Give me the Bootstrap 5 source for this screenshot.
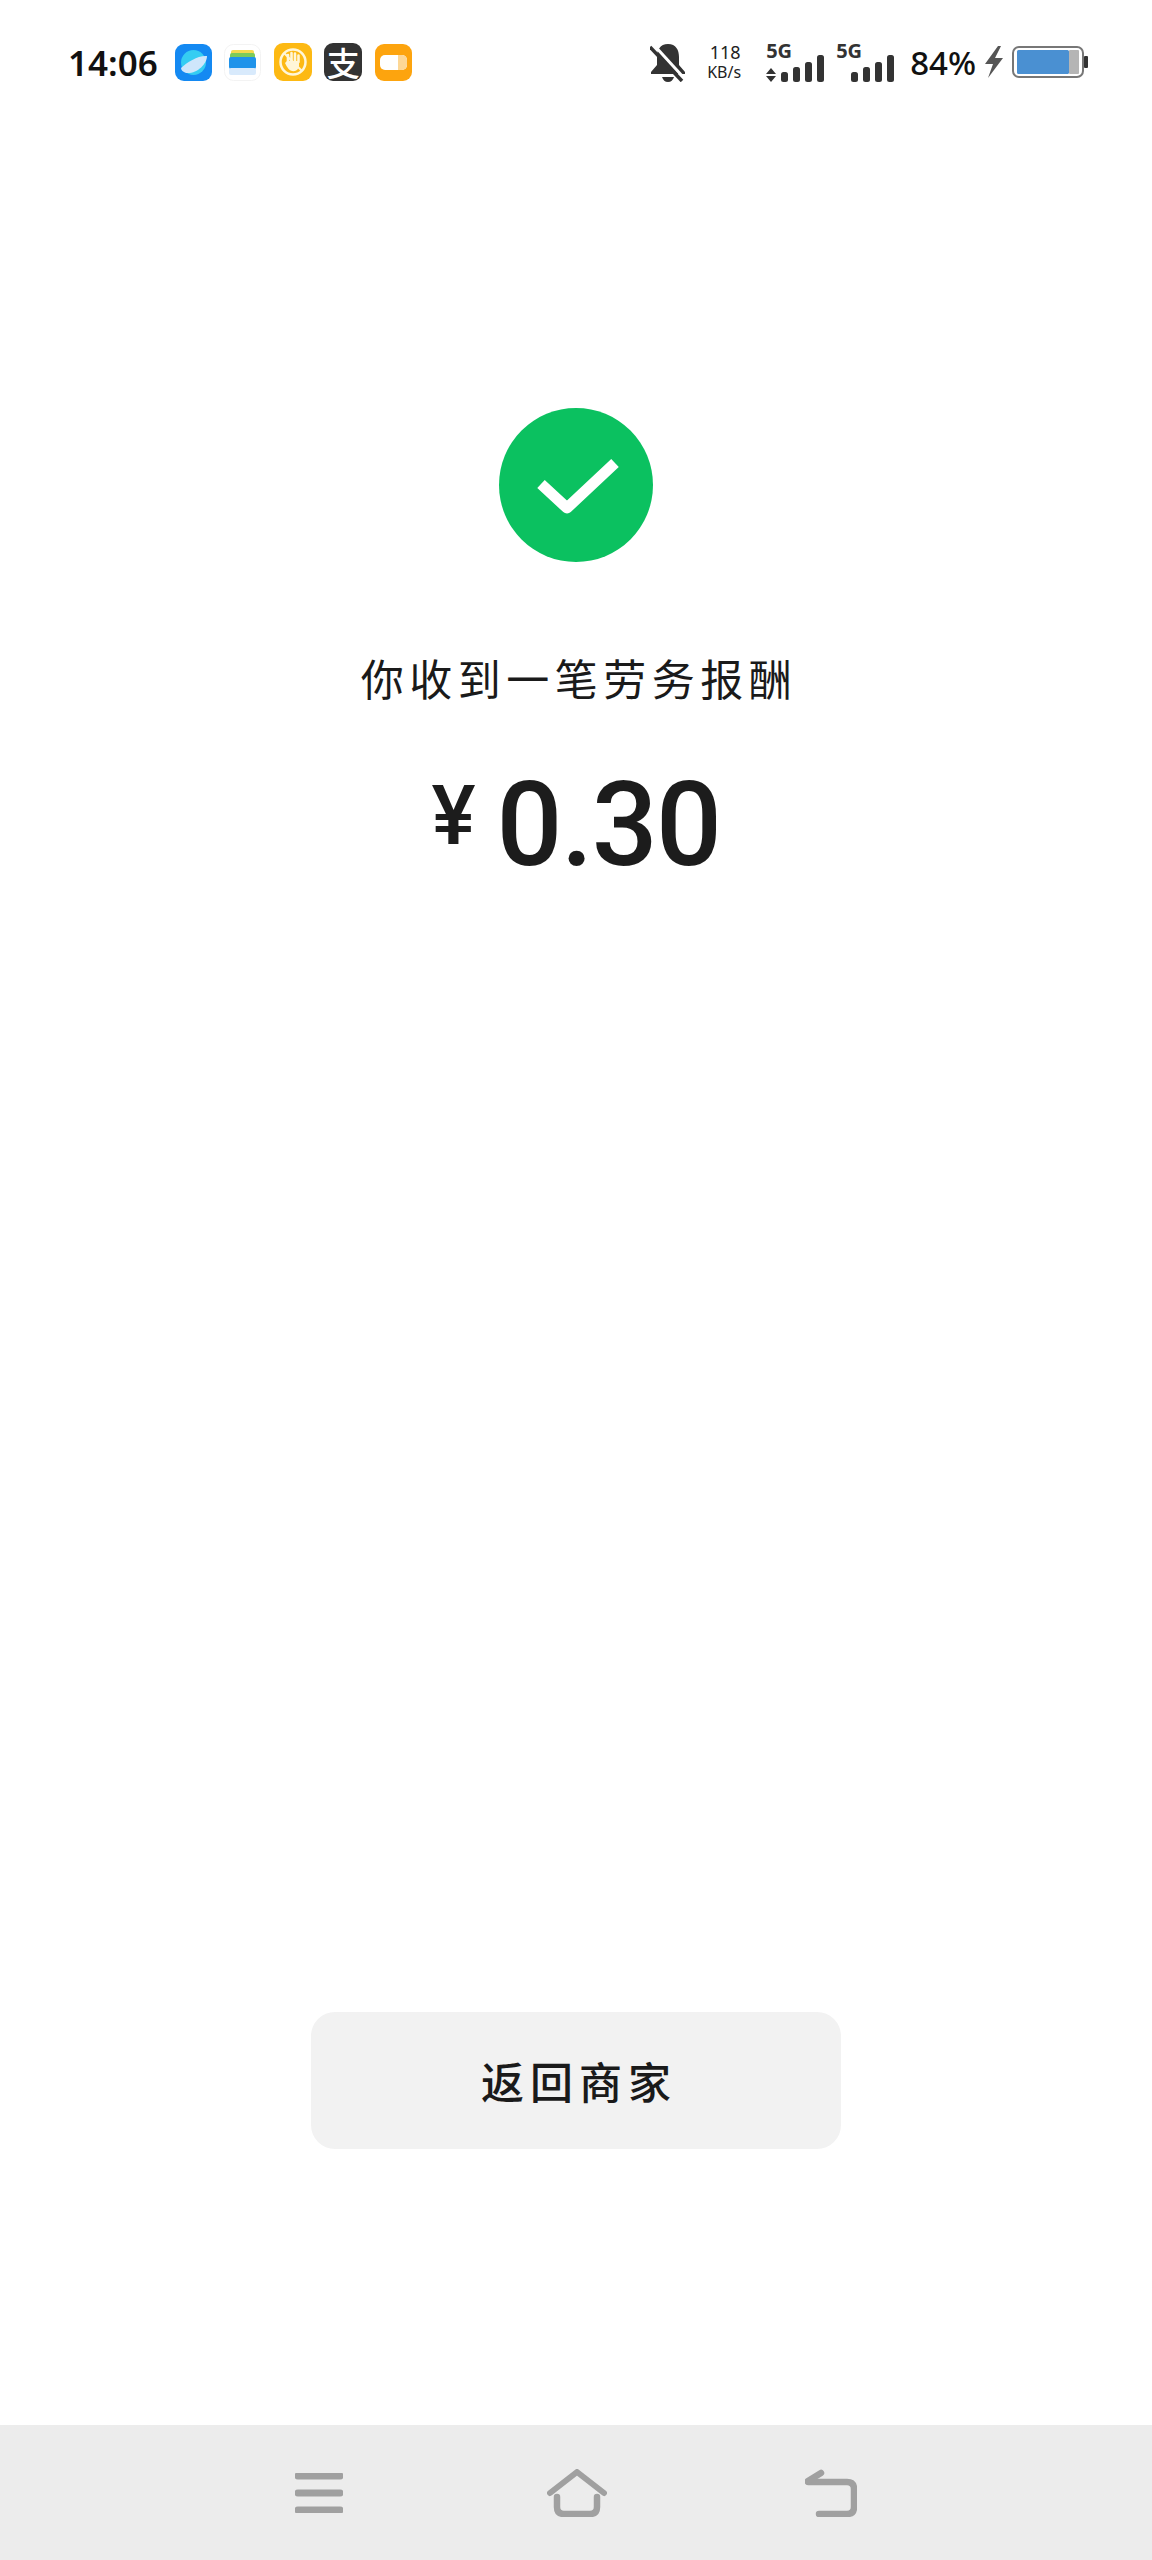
<!DOCTYPE html>
<html lang="zh-CN">
<head>
    <meta charset="UTF-8">
    <meta name="viewport" content="width=device-width, initial-scale=1.0">
    <title>收款结果</title>
    <link href="https://cdn.jsdelivr.net/npm/bootstrap@5.3.2/dist/css/bootstrap.min.css" rel="stylesheet">
    <style>
        body {
            background: #fff;
            font-family: "Noto Sans", "Noto Sans CJK SC", sans-serif;
        }

        .status-row {
            height: 124px;
            padding: 0 64px 0 68px;
            color: #111;
        }

        .status-time {
            font-size: 35px;
            font-weight: 600;
            line-height: 1;
            margin-right: 17px;
        }

        .status-apps {
            gap: 12.5px;
        }

        .alipay-tile {
            width: 38px;
            height: 38px;
            background: #333;
            border-radius: 9px;
            font-family: "Noto Sans CJK SC", sans-serif;
            font-size: 33px;
            font-weight: 500;
            line-height: 1;
        }

        .bell-icon {
            margin-top: 2px;
        }

        .speed-box {
            width: 36px;
            margin: 0 23px 0 21px;
            color: #222;
            text-align: center;
            white-space: nowrap;
        }

        .speed-num {
            font-size: 18px;
            line-height: 20px;
        }

        .speed-unit {
            font-size: 16px;
            line-height: 20px;
            margin-left: -2px;
        }

        .net-box {
            width: 62px;
            margin: 2px 8px 0 0;
        }

        .net-label {
            font-size: 20px;
            font-weight: 700;
            line-height: 14px;
            color: #333;
        }

        .net-bars {
            margin-top: -3px;
        }

        .battery-text {
            font-size: 33px;
            font-weight: 500;
            line-height: 1;
            margin: 0 8px 0 4px;
        }

        .battery-icon {
            margin-left: 8px;
        }

        .result-icon {
            margin-top: 284px;
        }

        .result-title {
            margin-top: 85px;
            padding-left: 6px;
            font-family: "Noto Sans CJK SC", sans-serif;
            font-size: 43px;
            font-weight: 400;
            letter-spacing: 5.5px;
            line-height: 60px;
            color: #1a1a1a;
        }

        .result-amount {
            margin-top: 63px;
            color: #1c1c1c;
            font-family: Roboto, sans-serif;
            font-weight: 500;
        }

        .amount-sign {
            font-size: 83px;
            line-height: 1;
            margin-top: 4px;
            margin-right: 21px;
        }

        .amount-value {
            font-size: 116px;
            letter-spacing: -1.5px;
            line-height: 110px;
        }

        .back-btn {
            width: 530px;
            height: 137px;
            margin-bottom: 276px;
            padding-left: 18px;
            background: #f2f2f2;
            border: 0;
            border-radius: 24px;
            font-family: "Noto Sans CJK SC", sans-serif;
            font-size: 43px;
            font-weight: 500;
            letter-spacing: 6px;
            line-height: 1.4;
            color: #1a1a1a;
        }

        .back-btn:hover {
            background: #f2f2f2;
            color: #1a1a1a;
        }

        .nav-row {
            height: 135px;
            background: #ececec;
            gap: 201px;
        }

        .home-key {
            margin: 0 -3px 0 3px;
        }
    </style>
</head>
<body class="vh-100 d-flex flex-column overflow-hidden">
    <div class="status-row d-flex align-items-center flex-shrink-0">
        <span class="status-time">14:06</span>
        <div class="status-apps d-flex align-items-center">
            <svg width="37" height="37" viewBox="0 0 37 37">
                <rect width="37" height="37" rx="9" fill="#1489f2"/>
                <circle cx="18.5" cy="18.5" r="12.5" fill="#35cdf2"/>
                <path d="M6 24 C12 18 24 11 32 12 C32 20 22 30 11 29 C8 28 6 26 6 24Z" fill="#cfe6fb"/>
            </svg>
            <svg width="37" height="37" viewBox="0 0 37 37">
                <rect x=".5" y=".5" width="36" height="36" rx="9" fill="#fff" stroke="#f3f3f3"/>
                <rect x="7" y="6" width="23" height="6" rx="2" fill="#f5d94e"/>
                <rect x="6" y="9" width="25" height="6" rx="2" fill="#7ccb5a"/>
                <rect x="5" y="13" width="27" height="12" rx="2" fill="#1f93ea"/>
                <rect x="5" y="24" width="27" height="7" rx="2" fill="#d8eafc"/>
            </svg>
            <svg width="38" height="38" viewBox="0 0 38 38">
                <rect width="38" height="38" rx="9" fill="#fdb913"/>
                <circle cx="19" cy="19" r="12.5" fill="none" stroke="#fff6d8" stroke-width="2.5"/>
                <path d="M14 19 V12 M17.5 18 V10 M21 18 V10.5 M24.5 19 V12.5" stroke="#fff6d8" stroke-width="2.6" stroke-linecap="round"/>
                <path d="M13 18 H25 V23 Q24 29 18 28 Q14 27 11 20Z" fill="#fff6d8"/>
                <path d="M10 10 L28 28" stroke="#fff6d8" stroke-width="2"/>
            </svg>
            <div class="alipay-tile d-flex align-items-center justify-content-center text-white">支</div>
            <svg width="37" height="37" viewBox="0 0 37 37">
                <rect width="37" height="37" rx="9" fill="#fda40e"/>
                <rect x="5" y="11" width="27" height="15" rx="5" fill="#fff"/>
                <path d="M23 11 h4 a5 5 0 0 1 5 5 v5 a5 5 0 0 1 -5 5 h-4z" fill="#fdd795"/>
            </svg>
        </div>
        <div class="ms-auto d-flex align-items-center">
            <svg class="bell-icon" width="36" height="38" viewBox="0 0 36 38">
                <path d="M18 0 C26 0 29 6 29 13 V21 L35 28 V30 H1 V28 L7 21 V13 C7 6 10 0 18 0Z" fill="#333"/>
                <path d="M12 33 H24 C23 36 21 38 18 38 C15 38 13 36 12 33Z" fill="#333"/>
                <path d="M3 0 L34 34" stroke="#fff" stroke-width="3"/>
                <path d="M0 3 L32 37" stroke="#333" stroke-width="3.5"/>
            </svg>
            <div class="speed-box">
                <div class="speed-num">118</div>
                <div class="speed-unit">KB/s</div>
            </div>
            <div class="net-box">
                <div class="net-label">5G</div>
                <svg class="net-bars d-block" width="60" height="27" viewBox="0 0 60 27">
                    <path d="M5 13 L10 19 H0Z M0 21 H10 L5 27Z" fill="#333"/>
                    <rect x="15" y="17" width="7" height="10" rx="2.5" fill="#333"/>
                    <rect x="27" y="12" width="7" height="15" rx="2.5" fill="#333"/>
                    <rect x="39" y="7" width="7" height="20" rx="2.5" fill="#333"/>
                    <rect x="51" y="0" width="7" height="27" rx="2.5" fill="#333"/>
                </svg>
            </div>
            <div class="net-box">
                <div class="net-label">5G</div>
                <svg class="net-bars d-block" width="60" height="27" viewBox="0 0 60 27">
                    <rect x="15" y="17" width="7" height="10" rx="2.5" fill="#333"/>
                    <rect x="27" y="12" width="7" height="15" rx="2.5" fill="#333"/>
                    <rect x="39" y="7" width="7" height="20" rx="2.5" fill="#333"/>
                    <rect x="51" y="0" width="7" height="27" rx="2.5" fill="#333"/>
                </svg>
            </div>
            <span class="battery-text">84%</span>
            <svg width="20" height="32" viewBox="0 0 20 32">
                <path d="M14 0 L1 18 H9 L4 32 L19 12 H11 L17 0Z" fill="#555"/>
            </svg>
            <svg class="battery-icon" width="76" height="32" viewBox="0 0 76 32">
                <rect x="1" y="1" width="70" height="30" rx="6" fill="#fff" stroke="#777" stroke-width="2"/>
                <rect x="5" y="4" width="52" height="24" rx="1.5" fill="#4a90d2"/>
                <rect x="57" y="4" width="10" height="24" rx="1" fill="#b5b5b5"/>
                <rect x="72" y="10" width="4" height="12" rx="1" fill="#333"/>
            </svg>
        </div>
    </div>

    <main class="flex-grow-1 d-flex flex-column align-items-center text-center">
        <svg class="result-icon" width="154" height="154" viewBox="0 0 154 154">
            <circle cx="77" cy="77" r="77" fill="#0bc160"/>
            <path d="M42 76 L68 100 L116 55" fill="none" stroke="#fff" stroke-width="11" stroke-linejoin="round"/>
        </svg>
        <div class="result-title">你收到一笔劳务报酬</div>
        <div class="result-amount d-flex align-items-start justify-content-center">
            <span class="amount-sign">¥</span>
            <span class="amount-value">0.30</span>
        </div>
        <button type="button" class="btn back-btn mt-auto">返回商家</button>
    </main>

    <div class="nav-row d-flex align-items-center justify-content-center flex-shrink-0">
        <svg width="48" height="40" viewBox="0 0 48 40">
            <path d="M3 3 H45 M3 20 H45 M3 37 H45" stroke="#a0a0a0" stroke-width="7" stroke-linecap="round"/>
        </svg>
        <svg class="home-key" width="60" height="48" viewBox="0 0 60 48">
            <path d="M3 24 L30 3 L57 24" fill="none" stroke="#a0a0a0" stroke-width="6" stroke-linecap="round" stroke-linejoin="round"/>
            <path d="M10 28 V38 Q10 45 17 45 H43 Q50 45 50 38 V28" fill="none" stroke="#a0a0a0" stroke-width="6.5" stroke-linecap="round"/>
        </svg>
        <svg width="52" height="48" viewBox="0 0 52 48">
            <path d="M3 13 H42 Q49 13 49 20 V38 Q49 45 42 45 H14" fill="none" stroke="#a0a0a0" stroke-width="6.5" stroke-linecap="round"/>
            <path d="M3 12 L16 4" fill="none" stroke="#a0a0a0" stroke-width="6.5" stroke-linecap="round"/>
        </svg>
    </div>

    <script src="https://cdn.jsdelivr.net/npm/bootstrap@5.3.2/dist/js/bootstrap.bundle.min.js"></script>
</body>
</html>
